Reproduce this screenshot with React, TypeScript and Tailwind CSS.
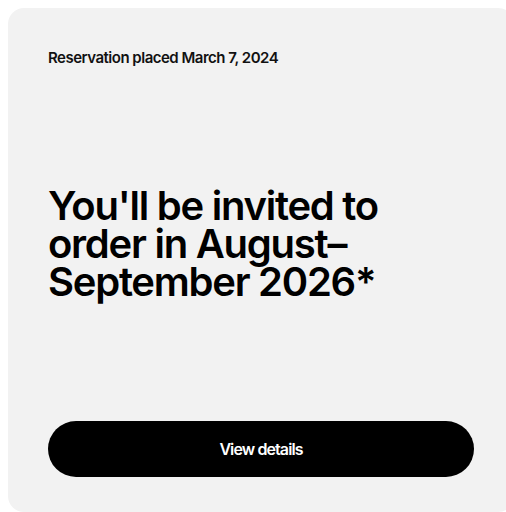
export default function App() {
  return (
    <div
      className="w-[506px] h-[512px] overflow-hidden bg-white pl-2 pt-2"
      style={{ fontFamily: "Inter, 'Noto Sans', 'Liberation Sans', sans-serif" }}
    >
      <div className="w-[506px] h-[504px] rounded-[16px] bg-[#f2f2f2] px-10 pt-10 pb-[35px] flex flex-col">
        <p className="text-[15px] leading-5 font-semibold text-[#111] tracking-[-0.5px]">
          Reservation placed March 7, 2024
        </p>
        <h1 className="mt-[119px] text-[40px] leading-[38px] font-semibold tracking-[-1.25px] text-black w-[360px]">
          You'll be invited to order in August–September 2026*
        </h1>
        <button className="mt-auto h-14 w-[426px] rounded-full bg-black text-white text-[16px] font-semibold tracking-[-0.9px]">
          View details
        </button>
      </div>
    </div>
  );
}
